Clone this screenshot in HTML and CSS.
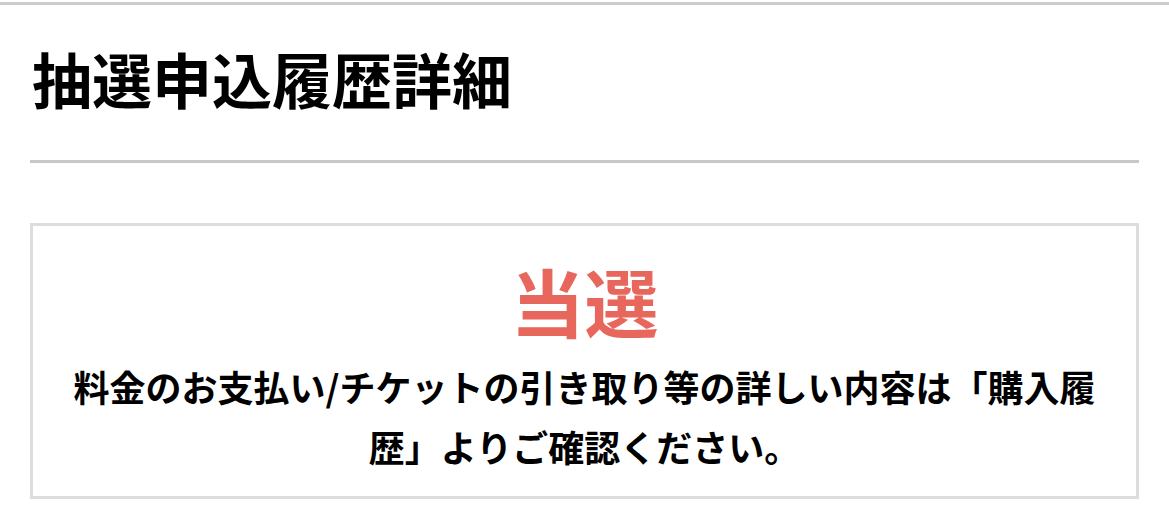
FILE: index.html
```html
<!DOCTYPE html>
<html lang="ja">
<head>
    <meta charset="UTF-8">
    <meta name="viewport" content="width=device-width, initial-scale=1.0">
    <title>抽選申込履歴詳細</title>
    <link rel="stylesheet" href="styles.css">
</head>
<body>
    <div class="headerLine"></div>

    <div class="content">
        <h1 class="pageTitle">抽選申込履歴詳細</h1>

        <div class="resultBox">
            <div class="resultStatus">当選</div>
            <p class="resultNote">料金のお支払い/チケットの引き取り等の詳しい内容は「購入履歴」よりご確認ください。</p>
        </div>
    </div>
</body>
</html>
```

FILE: styles.css
```css
body {
  font-family: "Noto Sans CJK JP", "Noto Sans", sans-serif;
  color: #000;
  background-color: #fff;
  margin: 0;
}
.headerLine {
  margin-top: 2px;
  height: 3px;
  background-color: #cccccc;
}
.content {
  padding: 0 30px;
}
.pageTitle {
  font-size: 60px;
  font-weight: 700;
  line-height: 1.2;
  margin: 0;
  padding: 37px 0 46px 2px;
  border-bottom: 3px solid #c8c8c8;
}
.resultBox {
  margin-top: 60px;
  border: 3px solid #dddddd;
  padding: 30px 30px 20px;
  text-align: center;
}
.resultStatus {
  color: #e8675d;
  font-size: 74px;
  font-weight: 700;
  line-height: 1.2;
}
.resultNote {
  font-size: 36px;
  font-weight: 700;
  line-height: 60px;
  margin: 11px 0 0;
}
```
